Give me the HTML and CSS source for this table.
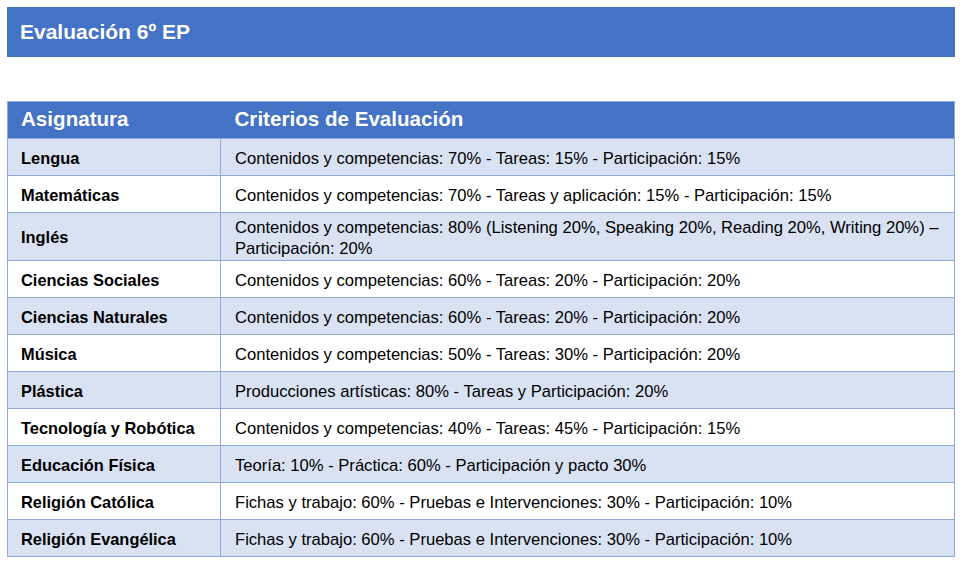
FILE: index.html
```html
<!DOCTYPE html>
<html lang="es">
<head>
<meta charset="utf-8">
<title>Evaluación 6º EP</title>
<link rel="stylesheet" href="styles.css">
</head>
<body>
<div class="page">
  <header class="title-bar"><h1>Evaluación 6º EP</h1></header>
  <table class="eval">
    <thead>
      <tr><th class="c1">Asignatura</th><th class="c2">Criterios de Evaluación</th></tr>
    </thead>
    <tbody>
      <tr class="alt"><td class="subj">Lengua</td><td>Contenidos y competencias: 70% - Tareas: 15% - Participación: 15%</td></tr>
      <tr><td class="subj">Matemáticas</td><td>Contenidos y competencias: 70% - Tareas y aplicación: 15% - Participación: 15%</td></tr>
      <tr class="alt tall"><td class="subj">Inglés</td><td>Contenidos y competencias: 80% (Listening 20%, Speaking 20%, Reading 20%, Writing 20%) – Participación: 20%</td></tr>
      <tr><td class="subj">Ciencias Sociales</td><td>Contenidos y competencias: 60% - Tareas: 20% - Participación: 20%</td></tr>
      <tr class="alt"><td class="subj">Ciencias Naturales</td><td>Contenidos y competencias: 60% - Tareas: 20% - Participación: 20%</td></tr>
      <tr><td class="subj">Música</td><td>Contenidos y competencias: 50% - Tareas: 30% - Participación: 20%</td></tr>
      <tr class="alt"><td class="subj">Plástica</td><td>Producciones artísticas: 80% - Tareas y Participación: 20%</td></tr>
      <tr><td class="subj">Tecnología y Robótica</td><td>Contenidos y competencias: 40% - Tareas: 45% - Participación: 15%</td></tr>
      <tr class="alt"><td class="subj">Educación Física</td><td>Teoría: 10% - Práctica: 60% - Participación y pacto 30%</td></tr>
      <tr><td class="subj">Religión Católica</td><td>Fichas y trabajo: 60% - Pruebas e Intervenciones: 30% - Participación: 10%</td></tr>
      <tr class="alt"><td class="subj">Religión Evangélica</td><td>Fichas y trabajo: 60% - Pruebas e Intervenciones: 30% - Participación: 10%</td></tr>
    </tbody>
  </table>
</div>
</body>
</html>
```
FILE: styles.css
```css
* { box-sizing: border-box; }
html, body { margin: 0; padding: 0; background: #ffffff; }
body {
  font-family: "Liberation Sans Narrow", "Arial Narrow", "Liberation Sans", Arial, sans-serif;
  color: #000000;
}
.page {
  padding: 7px 8px 0 7px;
  display: flex;
  flex-direction: column;
}
.title-bar {
  background: #4472c4;
  height: 50px;
  display: flex;
  align-items: center;
  padding-left: 13px;
}
.title-bar h1 {
  margin: 0;
  color: #ffffff;
  font-size: 21px;
  font-weight: bold;
}
.eval {
  margin-top: 44px;
  width: 948px;
  border-collapse: collapse;
  border: 1px solid #8eaadb;
}
.eval th {
  background: #4472c4;
  color: #ffffff;
  font-size: 20.6px;
  font-weight: bold;
  text-align: left;
  height: 37px;
  padding: 0 0 3px 13px;
}
.eval th.c1 { width: 213px; padding-left: 13px; }
.eval th.c2 { padding-left: 14px; }
.eval td {
  border: 1px solid #8eaadb;
  height: 37px;
  font-size: 16.6px;
  line-height: 21px;
  padding: 2px 5px 0 14px;
}
.eval td.subj {
  font-weight: bold;
  font-size: 16.4px;
  padding-left: 13px;
}
.eval tr.alt td { background: #d9e2f3; }
.eval tr.tall td { height: 48px; }
```
